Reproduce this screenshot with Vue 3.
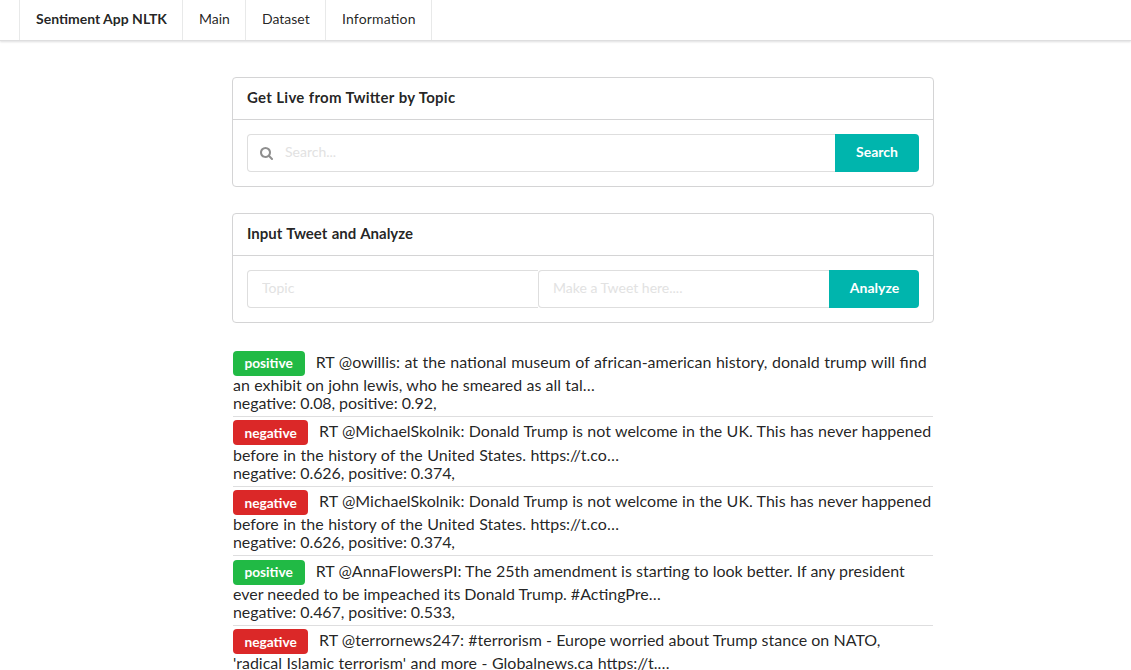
<script setup>
const links = [
  { name: 'Main', cls: 'main' },
  { name: 'Dataset', cls: 'dataset' },
  { name: 'Information', cls: 'information' }
]

const skolnik = {
  label: 'negative',
  lines: [
    { text: 'RT @MichaelSkolnik: Donald Trump is not welcome in the UK. This has never happened', gap: 0.22 },
    { text: 'before in the history of the United States. https://t.co…', gap: 0.44 }
  ],
  scores: 'negative: 0.626, positive: 0.374,'
}

const tweets = [
  {
    label: 'positive',
    lines: [
      { text: 'RT @owillis: at the national museum of african-american history, donald trump will find', gap: 0.46 },
      { text: 'an exhibit on john lewis, who he smeared as all tal…', gap: 0.16 }
    ],
    scores: 'negative: 0.08, positive: 0.92,'
  },
  skolnik,
  skolnik,
  {
    label: 'positive',
    lines: [
      { text: 'RT @AnnaFlowersPI: The 25th amendment is starting to look better. If any president', gap: 0.07 },
      { text: 'ever needed to be impeached its Donald Trump. #ActingPre…', gap: -0.12 }
    ],
    scores: 'negative: 0.467, positive: 0.533,'
  },
  {
    label: 'negative',
    lines: [
      { text: 'RT @terrornews247: #terrorism - Europe worried about Trump stance on NATO,', gap: 0.1 },
      { text: "'radical Islamic terrorism' and more - Globalnews.ca https://t.…", gap: 0.4 }
    ],
    scores: ''
  }
]
</script>

<template>
  <div class="page">
    <nav class="menu">
      <a class="item brand">Sentiment App NLTK</a>
      <a v-for="link in links" :key="link.name" class="item" :class="link.cls">{{ link.name }}</a>
    </nav>

    <main class="container">
      <section class="card">
        <h4 class="header live">Get Live from Twitter by Topic</h4>
        <form class="fields" @submit.prevent>
          <div class="field">
            <svg class="icon" viewBox="0 0 1664 1664" aria-hidden="true">
              <path d="M1152 704q0-185-131.500-316.500T704 256 387.500 387.500 256 704t131.500 316.500T704 1152t316.500-131.500T1152 704zm512 832q0 52-38 90t-90 38q-54 0-90-38l-343-342q-179 124-399 124-143 0-273.500-55.500t-225-150-150-225T0 704t55.500-273.500 150-225 225-150T704 0t273.500 55.500 225 150 150 225T1408 704q0 220-124 399l343 343q37 37 37 90z" />
            </svg>
            <input class="input with-icon" type="text" placeholder="Search..." />
          </div>
          <button class="button search">Search</button>
        </form>
      </section>

      <section class="card">
        <h4 class="header compose">Input Tweet and Analyze</h4>
        <form class="fields" @submit.prevent>
          <div class="field"><input class="input" type="text" placeholder="Topic" /></div>
          <div class="field"><input class="input" type="text" placeholder="Make a Tweet here...." /></div>
          <button class="button analyze">Analyze</button>
        </form>
      </section>

      <div class="list">
        <div v-for="(tweet, i) in tweets" :key="i" class="tweet">
          <div v-for="(line, n) in tweet.lines" :key="n" class="line">
            <span v-if="n === 0" class="label" :class="tweet.label">{{ tweet.label }}</span>
            <span :style="{ wordSpacing: line.gap + 'px' }">{{ line.text }}</span>
          </div>
          <div class="scores">{{ tweet.scores }}</div>
        </div>
      </div>
    </main>
  </div>
</template>

<style>
html,
body {
  margin: 0;
  background: #fff;
  overflow: hidden;
}
</style>

<style scoped>
.page {
  height: 670px;
  overflow: hidden;
  font-family: Lato, "Liberation Sans", sans-serif;
  font-size: 14px;
  line-height: 20px;
  color: rgba(0, 0, 0, 0.87);
}

.page *,
.page {
  box-sizing: border-box;
}

.menu {
  display: flex;
  height: 41px;
  padding-left: 19px;
  border-bottom: 1px solid rgba(34, 36, 38, 0.15);
  box-shadow: 0 1px 2px 0 rgba(34, 36, 38, 0.15);
}

.item {
  display: flex;
  align-items: center;
  padding: 0 0 2px 16px;
  line-height: 14px;
  white-space: nowrap;
  border-right: 1px solid rgba(34, 36, 38, 0.1);
}

.brand {
  width: 164px;
  font-weight: 700;
  border-left: 1px solid rgba(34, 36, 38, 0.1);
}

.main {
  width: 63px;
}

.dataset {
  width: 80px;
}

.information {
  width: 106px;
  letter-spacing: 0.17px;
  font-feature-settings: "liga" 1;
}

.container {
  width: 702px;
  margin: 36px 0 0 232px;
}

.card {
  height: 110px;
  margin-bottom: 26px;
  border: 1px solid #d4d4d5;
  border-radius: 4px;
}

.header {
  height: 42px;
  margin: 0;
  padding: 10px 14px 0;
  font-size: 15px;
  font-weight: 700;
  line-height: 19px;
  border-bottom: 1px solid #d4d4d5;
}

.live {
  letter-spacing: 0.24px;
  word-spacing: 0.4px;
  font-feature-settings: "liga" 1;
}

.compose {
  word-spacing: 0.7px;
}

.fields {
  display: flex;
  height: 66px;
  padding: 14px;
}

.field {
  position: relative;
  flex: 1 1 0;
  min-width: 0;
}

.input {
  display: block;
  width: 100%;
  height: 38px;
  margin: 0;
  padding: 0 14px 3px;
  font: inherit;
  color: inherit;
  background: #fff;
  border: 1px solid rgba(34, 36, 38, 0.15);
  border-right: 0;
  border-radius: 4px 0 0 4px;
  outline: none;
}

.with-icon {
  padding-left: 37px;
}

.input::placeholder {
  color: #e2e2e2;
  opacity: 1;
}

.icon {
  position: absolute;
  left: 13px;
  top: 13px;
  width: 13px;
  height: 13px;
  fill: #8f8f8f;
}

.button {
  height: 38px;
  padding: 0 0 2px;
  font: inherit;
  font-weight: 700;
  color: #fff;
  background: #00b5ad;
  border: 0;
  border-radius: 0 4px 4px 0;
}

.search {
  width: 84px;
}

.analyze {
  width: 90px;
  padding-left: 1px;
}

.list {
  margin: 27.800px 1px 0;
  font-size: 16px;
  line-height: 18.2857px;
}

.tweet {
  padding: 3.4286px 0 3.6px;
  border-top: 1px solid rgba(34, 36, 38, 0.15);
}

.tweet:first-child {
  padding-top: 0;
  border-top: 0;
}

.line {
  white-space: nowrap;
}

.scores {
  letter-spacing: -0.08px;
  font-feature-settings: "liga" 1;
}

.label {
  display: inline-block;
  margin: 0 10.857px 0.05px 0;
  padding: 5.486px 11.424px 5.826px;
  font-size: 13.714px;
  font-weight: 700;
  line-height: 1;
  color: #fff;
  border-radius: 4px;
}

.positive {
  padding-right: 12.1px;
  background: #21ba45;
}

.negative {
  background: #db2828;
}
</style>
